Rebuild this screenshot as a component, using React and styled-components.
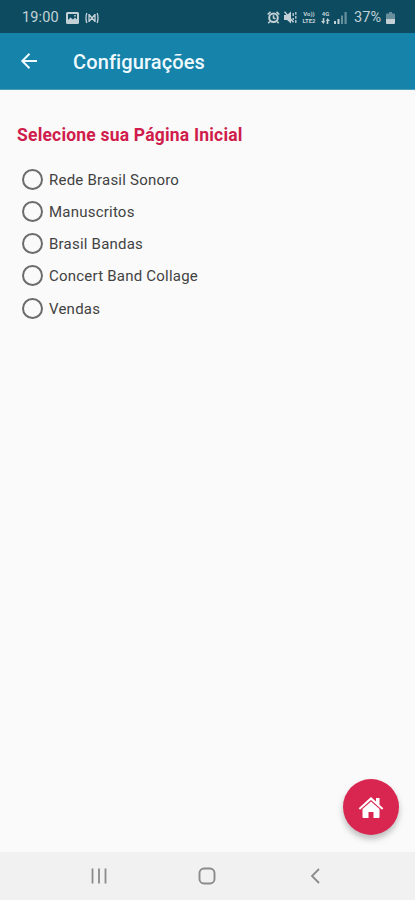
import React from 'react';
import styled, { createGlobalStyle } from 'styled-components';

const GlobalStyle = createGlobalStyle`
  * { box-sizing: border-box; }
  body { margin: 0; background: #fafafa; font-family: Roboto, sans-serif; }
`;

const Screen = styled.div`
  position: relative;
  display: flex;
  flex-direction: column;
  height: 900px;
  width: 100%;
  background: #fafafa;
  overflow: hidden;
`;

const StatusBar = styled.div`
  display: flex;
  align-items: center;
  justify-content: space-between;
  flex: none;
  height: 33px;
  padding: 2px 20px 0 22px;
  background: #0d4c60;
  color: #c3d1d7;
`;

const StatusGroup = styled.div`
  display: flex;
  align-items: center;
  height: 18px;
`;

const StatusText = styled.span`
  font-size: 14.5px;
  line-height: 18px;
  padding-top: 1px;
  letter-spacing: ${(p) => p.$spacing || '0'};
  width: ${(p) => p.$width};
  margin-right: ${(p) => p.$gap};
  white-space: nowrap;
`;

const Icon = styled.svg`
  display: block;
  flex: none;
  margin-right: ${(p) => p.$gap || '0'};
`;

const NetworkLabel = styled.span`
  display: flex;
  flex-direction: column;
  align-items: center;
  gap: 1px;
  width: ${(p) => p.$width};
  margin-right: ${(p) => p.$gap};
  font-size: 6px;
  font-weight: 700;
  line-height: 6px;
`;

const AppBar = styled.header`
  display: flex;
  align-items: center;
  flex: none;
  height: 57px;
  padding-left: 20px;
  background: #1583aa;
  border-bottom: 1px solid #4c9dbb;
  color: #eefaff;
`;

const BackButton = styled.button`
  display: flex;
  width: 18px;
  height: 18px;
  margin-right: 35px;
  padding: 0;
  border: 0;
  background: none;
  color: inherit;
`;

const Title = styled.h1`
  margin: 0;
  padding-top: 2px;
  font-size: 20px;
  font-weight: 500;
  line-height: 28px;
  letter-spacing: 0.12px;
`;

const Content = styled.main`
  flex: 1;
  padding: 33px 17px 0;
`;

const SectionTitle = styled.h2`
  margin: 0 0 16px;
  color: #d01c4b;
  font-size: 17.5px;
  font-weight: 700;
  line-height: 24px;
  letter-spacing: 0.2px;
`;

const Options = styled.div`
  display: flex;
  flex-direction: column;
  padding-left: 5px;
`;

const Option = styled.label`
  display: flex;
  align-items: center;
  height: 32.25px;
  color: #424242;
  font-size: 15px;
  letter-spacing: 0.22px;
`;

const OptionText = styled.span`
  padding-top: 1px;
`;

const Radio = styled.input`
  appearance: none;
  flex: none;
  width: 21px;
  height: 21px;
  margin: 0 6px 0 0;
  border: 2px solid #6b6b6b;
  border-radius: 50%;
  &:checked { background: radial-gradient(#d92450 45%, transparent 50%); }
`;

const HomeButton = styled.button`
  position: absolute;
  right: 16px;
  bottom: 65px;
  display: flex;
  align-items: center;
  justify-content: center;
  width: 56px;
  height: 56px;
  padding: 2px 0 0;
  border: 0;
  border-radius: 50%;
  background: #d92650;
  color: #fff;
  box-shadow: 0 4px 6px rgba(0, 0, 0, 0.25);
`;

const NavBar = styled.nav`
  display: flex;
  align-items: center;
  justify-content: space-around;
  flex: none;
  height: 48px;
  padding: 0 45px;
  background: #f1f1f1;
`;

const NavButton = styled.button`
  display: flex;
  align-items: center;
  justify-content: center;
  width: 48px;
  height: 47px;
  padding: 0;
  border: 0;
  background: none;
  color: #8b8b8b;
`;

const options = [
  'Rede Brasil Sonoro',
  'Manuscritos',
  'Brasil Bandas',
  'Concert Band Collage',
  'Vendas',
];

export default function App() {
  return (
    <Screen>
      <GlobalStyle />
      <StatusBar>
        <StatusGroup>
          <StatusText $width="37px" $gap="7px" $spacing="0.15px">19:00</StatusText>
          <Icon width="13" height="12" viewBox="0 0 13 12" $gap="6px">
            <path fill="currentColor" fillRule="evenodd" d="M1.5 0h10Q13 0 13 1.5v9Q13 12 11.5 12h-10Q0 12 0 10.5v-9Q0 0 1.5 0ZM2 2v6l2.5-2.5L7 7.5l2-2 2 2V2ZM8.2 3h1.6v1.6H8.2Z" />
          </Icon>
          <Icon width="14" height="12" viewBox="0 0 14 12" fill="none" stroke="currentColor" strokeWidth="1.3">
            <path d="M1.8 1Q.2 6 1.8 11M12.2 1q1.6 5 0 10M4 2v8M10 2v8M4 2.5l6 7M4 9.5l6-7" />
          </Icon>
        </StatusGroup>
        <StatusGroup>
          <Icon width="13" height="13" viewBox="0 0 13 13" $gap="4px">
            <circle cx="6.5" cy="6.7" r="4.3" fill="none" stroke="currentColor" strokeWidth="2" />
            <path d="M.7 3.5 3.5.8M9.5.8l2.8 2.7M2.8 10.5l-1.5 1.7M10.2 10.5l1.5 1.7M6.5 4.2v2.7l2 1" fill="none" stroke="currentColor" strokeWidth="1.6" />
          </Icon>
          <Icon width="13" height="13" viewBox="0 0 13 13" $gap="4px">
            <path d="M0 4h3l4-3.5v12L3 9H0Z" fill="currentColor" />
            <path d="m.5.8 9 10.5" stroke="currentColor" strokeWidth="1.5" />
            <path d="M9.2 2v3M9.2 7v2M11.8 1v2.8M11.8 5v2.8M11.8 9v3" stroke="currentColor" strokeWidth="1.3" />
          </Icon>
          <NetworkLabel $width="16px" $gap="4px"><span>Vo))</span><span>LTE2</span></NetworkLabel>
          <NetworkLabel $width="9px" $gap="4px">
            <span>4G</span>
            <Icon width="9" height="6" viewBox="0 0 9 6" fill="currentColor">
              <path d="M2.5 6 0 3h1.7V0h1.6v3H4ZM6.5 0 9 3H7.3v3H5.7V3H5Z" />
            </Icon>
          </NetworkLabel>
          <Icon width="13" height="12" viewBox="0 0 13 12" $gap="7px" fill="currentColor">
            <path d="M0 9h2v3H0ZM3.5 7h2v5h-2Z" />
            <path opacity=".5" d="M7 3.5h2V12H7ZM10.5 0h2.2v12h-2.2Z" />
          </Icon>
          <StatusText $width="28px" $gap="4px" $spacing="0.15px">37%</StatusText>
          <Icon width="9" height="12" viewBox="0 0 9 12" fill="currentColor">
            <path opacity=".5" d="M3 0h3v1.5h2Q9 1.5 9 2.5V7H0V2.5q0-1 1-1h2Z" />
            <path d="M0 7h9v4q0 1-1 1H1q-1 0-1-1Z" />
          </Icon>
        </StatusGroup>
      </StatusBar>
      <AppBar>
        <BackButton aria-label="Voltar">
          <Icon width="18" height="18" viewBox="0 0 18 18" fill="none" stroke="currentColor" strokeWidth="2">
            <path d="M17 9H2.5M9.5 1.8 2.3 9l7.2 7.2" />
          </Icon>
        </BackButton>
        <Title>Configurações</Title>
      </AppBar>
      <Content>
        <SectionTitle>Selecione sua Página Inicial</SectionTitle>
        <Options>
          {options.map((label) => (
            <Option key={label}>
              <Radio type="radio" name="pagina" />
              <OptionText>{label}</OptionText>
            </Option>
          ))}
        </Options>
      </Content>
      <NavBar>
        <NavButton aria-label="Recentes">
          <Icon width="16" height="16" viewBox="0 0 16 16" stroke="currentColor" strokeWidth="1.8">
            <path d="M1.5 .5v15M8 .5v15M14.5 .5v15" />
          </Icon>
        </NavButton>
        <NavButton aria-label="Início">
          <Icon width="18" height="18" viewBox="0 0 18 18" fill="none" stroke="currentColor" strokeWidth="1.9">
            <rect x="1.5" y="1.5" width="15" height="15" rx="4.5" />
          </Icon>
        </NavButton>
        <NavButton aria-label="Voltar">
          <Icon width="12" height="16" viewBox="0 0 12 16" fill="none" stroke="currentColor" strokeWidth="1.8">
            <path d="M9 1 2 8l7 7" />
          </Icon>
        </NavButton>
      </NavBar>
      <HomeButton aria-label="Página inicial">
        <Icon width="26" height="22" viewBox="0 0 26 22" fill="currentColor">
          <path d="M13 0 18 4.6V1h3.5v6.8L25.3 11.3 24 12.8 13 3 2 12.8.7 11.3Z" />
          <path d="M13 4.5 21.5 12v8q0 1-1 1H15.5v-6h-5v6H5.5q-1 0-1-1v-8Z" />
        </Icon>
      </HomeButton>
    </Screen>
  );
}
